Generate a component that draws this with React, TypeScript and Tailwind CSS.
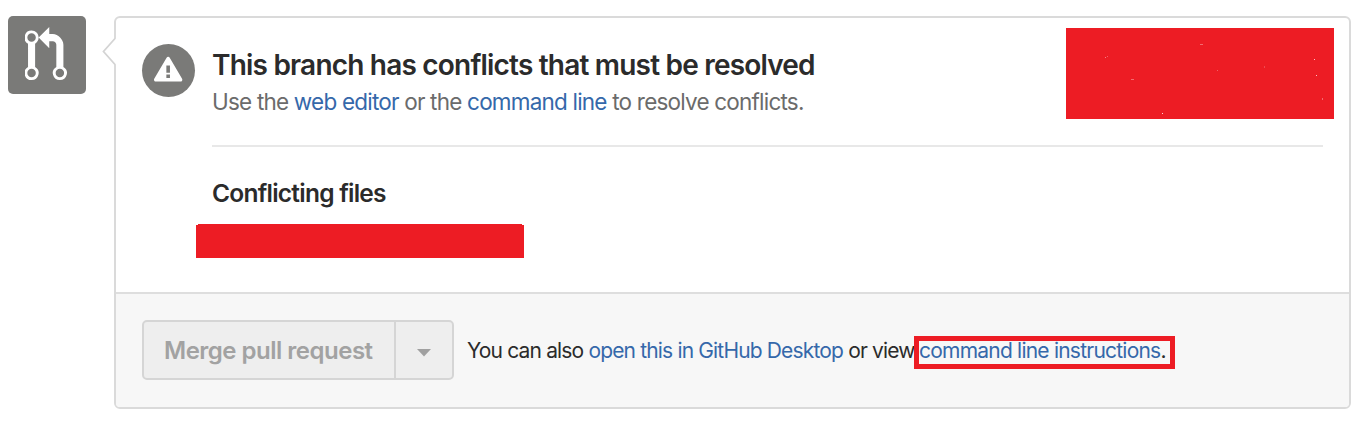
import React from "react";

const SPECKS = [
  { x: 134, y: 16, w: 3, h: 1, o: 0.35 },
  { x: 39, y: 29, w: 1, h: 1, o: 0.45 },
  { x: 41, y: 28, w: 1, h: 1, o: 0.3 },
  { x: 65, y: 51, w: 3, h: 1, o: 0.35 },
  { x: 151, y: 42, w: 1, h: 1, o: 0.3 },
  { x: 198, y: 38, w: 1, h: 2, o: 0.2 },
  { x: 248, y: 31, w: 1, h: 1, o: 0.75 },
  { x: 250, y: 47, w: 1, h: 1, o: 0.75 },
  { x: 256, y: 70, w: 1, h: 2, o: 0.35 },
  { x: 96, y: 85, w: 1, h: 1, o: 0.8 },
];

function PullRequestIcon() {
  return (
    <svg width="42.5" height="56.6" viewBox="0.15 0 12 16" fill="#fff">
      <path d="M11 11.28V5c-.03-.78-.34-1.47-.94-2.06C9.46 2.35 8.78 2.03 8 2H7V0L4 3l3 3V4h1c.27.02.48.11.69.31.21.2.3.42.31.69v6.28A1.993 1.993 0 0 0 10 15a1.993 1.993 0 0 0 1-3.72zm-1 2.92c-.66 0-1.2-.55-1.2-1.2 0-.65.55-1.2 1.2-1.2.65 0 1.2.55 1.2 1.2 0 .65-.55 1.2-1.2 1.2zM4 3c0-1.11-.89-2-2-2a1.993 1.993 0 0 0-1 3.72v6.56A1.993 1.993 0 0 0 2 15a1.993 1.993 0 0 0 1-3.72V4.72c.59-.34 1-.98 1-1.72zm-.8 10c0 .66-.55 1.2-1.2 1.2-.65 0-1.2-.55-1.2-1.2 0-.65.55-1.2 1.2-1.2.65 0 1.2.55 1.2 1.2zM2 4.2C1.34 4.2.8 3.65.8 3c0-.65.55-1.2 1.2-1.2.65 0 1.2.55 1.2 1.2 0 .65-.55 1.2-1.2 1.2z" />
    </svg>
  );
}

function AlertIcon() {
  return (
    <svg width="28.3" height="28.3" viewBox="0 0 16 16" fill="#fff">
      <path d="M8.893 1.5c-.183-.31-.52-.5-.887-.5s-.703.19-.886.5L.138 13.499a.98.98 0 0 0 0 1.001c.193.31.53.501.886.501h13.964c.367 0 .704-.19.877-.5a1.03 1.03 0 0 0 .01-1.002L8.893 1.5zm.133 11.497H6.987v-2.003h2.039v2.003zm0-3.004H6.987V5.987h2.039v4.006z" />
    </svg>
  );
}

export default function App() {
  return (
    <div className="flex h-[426px] w-[1360px] items-start overflow-hidden bg-white pt-4 pl-2 font-['Inter',sans-serif] whitespace-nowrap text-[#2b2b2b]">
      <div className="h-[78px] w-[77.5px] shrink-0 rounded-[5px] bg-[#7a7a78] pt-[11px] pl-[17px]">
        <PullRequestIcon />
      </div>

      <div className="relative ml-[28.5px] flex h-[393px] w-[1237px] shrink-0 flex-col rounded-[6px] border-2 border-[#dadada]">
        <svg className="absolute -top-0.5 -left-[14px] mt-[21px]" width="15" height="30" viewBox="0 0 15 30">
          <path d="M15 1.5 13 2 1.5 14.5 13 27 15 27.5z" fill="#fff" />
          <path d="M13 1.5 1.5 14.5 13 27.5" fill="none" stroke="#d4d4d4" strokeWidth="1.8" />
        </svg>

        <div className="flex h-[274px] shrink-0 pl-[26px]">
          <div className="mt-[26.4px] flex h-[53px] w-[53px] shrink-0 justify-center rounded-full bg-[#7a7a78] pt-[10.5px]">
            <AlertIcon />
          </div>
          <div className="ml-[17px] w-[1111px] shrink-0">
            <div className="flex h-[127px] justify-between">
              <div className="pt-[29px]">
                <h1 className="h-9 text-[28px] leading-9 font-semibold tracking-[-0.8px]">This branch has conflicts that must be resolved</h1>
                <p className="mt-[3px] text-[22.5px] leading-8 tracking-[-0.79px] text-[#6b6b6b]">
                  Use the <a className="text-[#3568aa]">web editor</a> or the <a className="text-[#3568aa]">command line</a> to resolve conflicts.
                </p>
              </div>
              <div className="relative mt-[10px] -mr-[11px] h-[91px] w-[268px] shrink-0 bg-[#ed1c24]">
                {SPECKS.map((s, i) => (
                  <span key={i} className="absolute bg-white" style={{ left: s.x, top: s.y, width: s.w, height: s.h, opacity: s.o }} />
                ))}
              </div>
            </div>
            <div className="h-0.5 bg-[#e8e8e8]" />
            <h2 className="mt-[30px] h-8 text-[24.5px] leading-8 font-semibold tracking-[-0.75px]">Conflicting files</h2>
            <div className="mt-[15px] -ml-4 w-[328px]">
              <div className="mx-0.5 h-px bg-[#ed1c24]" />
              <div className="h-[33px] bg-[#ed1c24]" />
            </div>
          </div>
        </div>

        <div className="flex flex-1 items-start rounded-b-[4px] border-t-2 border-[#dedede] bg-[#f7f7f7] pt-[26px] pl-[26px]">
          <div className="flex h-[60px] w-[312px] shrink-0 rounded-[5px] border-2 border-[#d5d5d5] bg-[#eee]">
            <button className="w-[252px] border-r-2 border-[#d5d5d5] pt-0.5 pl-5 text-left text-[24px] font-semibold tracking-[-0.5px] text-[#a2a2a2]">Merge pull request</button>
            <button className="flex flex-1 items-center justify-center pt-1.5">
              <svg width="14" height="8" viewBox="0 0 14 8" fill="#a0a0a0">
                <path d="M0 0h14L7 7.5z" />
              </svg>
            </button>
          </div>
          <div className="mt-[16px] ml-[13px] flex text-[21px] leading-[30px] tracking-[-0.84px]">
            <span className="w-[447px]">
              You can also <a className="text-[#3568aa]">open this in GitHub Desktop</a> or view
            </span>
            <span className="h-[33px] w-[261px] border-[5px] border-[#ed1c24] leading-5 tracking-[-0.78px]">
              <a className="text-[#3568aa]">command line instructions</a>.
            </span>
          </div>
        </div>
      </div>
    </div>
  );
}
